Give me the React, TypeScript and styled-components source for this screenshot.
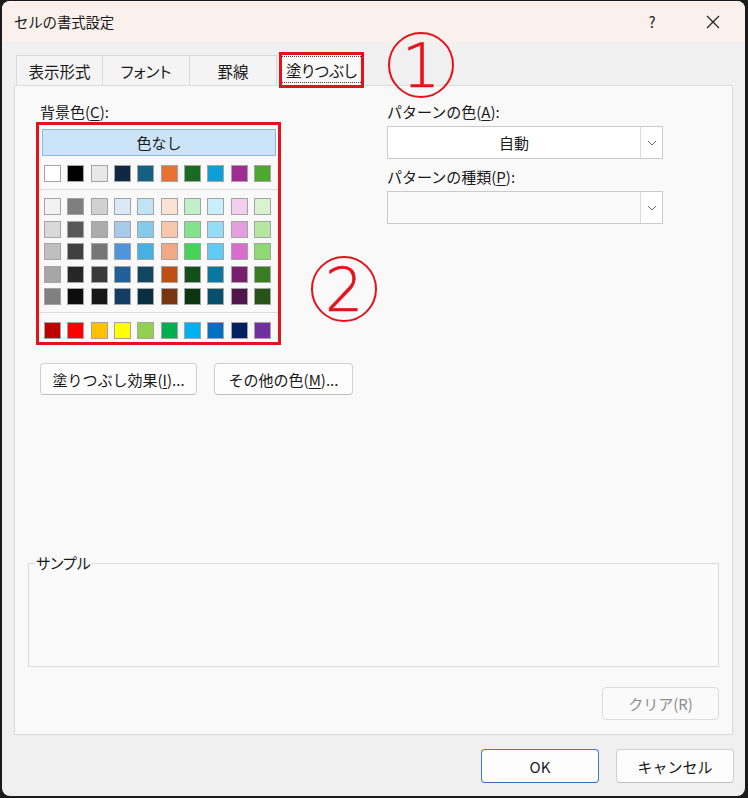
import React from "react";
import styled, { createGlobalStyle, css } from "styled-components";

const GlobalStyle = createGlobalStyle`
  html, body { margin: 0; padding: 0; background: #1b1b1b; }
  body {
    font-family: "Noto Sans CJK JP", "Noto Sans", sans-serif;
    color: #1a1a1a;
  }
  * { box-sizing: border-box; }
`;

const RED = "#e5121b";

/* ---------- window chrome ---------- */

const Frame = styled.div`
  width: 748px;
  height: 798px;
  padding: 1px 3px 2px 2px;
  background: #1b1b1b;
`;

const Window = styled.div`
  position: relative;
  width: 100%;
  height: 100%;
  display: flex;
  flex-direction: column;
  background: #f0f0f0;
  border-radius: 8px;
  overflow: hidden;
`;

const TitleBar = styled.div`
  height: 41px;
  flex: none;
  display: flex;
  align-items: center;
  padding: 0 9px 0 12px;
  background: #faf1ed;
`;

const Title = styled.div`
  flex: 1;
  font-size: 14.5px;
  line-height: 20px;
  letter-spacing: -0.2px;
`;

const TitleButton = styled.div`
  width: 46px;
  height: 41px;
  display: flex;
  align-items: center;
  justify-content: center;
  font-size: 15px;
  color: #222;
  & + & { margin-left: 15px; }
`;

const Body = styled.div`
  flex: 1;
  display: flex;
  flex-direction: column;
  padding: 0 12px 0 12px;
`;

/* ---------- tabs ---------- */

const TabStrip = styled.div`
  height: 43px;
  flex: none;
  display: flex;
  align-items: flex-end;
  padding-left: 2px;
`;

const Tab = styled.div<{ $active?: boolean; $first?: boolean }>`
  position: relative;
  flex: none;
  width: 87px;
  height: 30px;
  display: flex;
  align-items: center;
  justify-content: center;
  font-size: 15.5px;
  font-feature-settings: "palt";
  background: #f4f4f4;
  border: 1px solid #dadada;
  border-bottom: none;
  border-left-width: ${(p) => (p.$first ? 1 : 0)}px;
  ${(p) =>
    p.$active &&
    css`
      z-index: 1;
      width: 85px;
      height: 36px;
      margin-left: 2px;
      margin-bottom: -3px;
      background: #f9f9f9;
      border: 3px solid ${RED};
    `}
`;

const FocusRing = styled.span`
  align-self: stretch;
  flex: 1;
  margin: 1px 0 2px;
  display: flex;
  align-items: center;
  justify-content: center;
  border-top: 1px dotted #444;
  border-bottom: 1px dotted #444;
`;

/* ---------- panel ---------- */

const Panel = styled.div`
  height: 650px;
  flex: none;
  display: flex;
  flex-direction: column;
  padding: 16px 13px 14px 13px;
  background: #f9f9f9;
  border: 1px solid #dcdcdc;
`;

const TopRow = styled.div`
  display: flex;
  align-items: flex-start;
  padding-left: 8px;
`;

const LeftColumn = styled.div`
  width: 245px;
  flex: none;
  display: flex;
  flex-direction: column;
`;

const RightColumn = styled.div`
  width: 276px;
  flex: none;
  margin-left: 106px;
  display: flex;
  flex-direction: column;
`;

const Label = styled.div<{ $indent?: number; $gap?: number }>`
  height: 20px;
  line-height: 20px;
  font-size: 15px;
  padding-left: ${(p) => p.$indent ?? 0}px;
  margin-top: ${(p) => p.$gap ?? 0}px;
  white-space: nowrap;
  u { text-underline-offset: 2px; }
`;

/* ---------- colour palette ---------- */

const Palette = styled.div`
  width: 245px;
  border: 3px solid ${RED};
  padding: 4px 2px 3px 3px;
  display: flex;
  flex-direction: column;
`;

const NoColor = styled.div`
  height: 27px;
  display: flex;
  align-items: center;
  justify-content: center;
  font-size: 15px;
  background: #cce4f7;
  border: 1px solid #8db7dc;
`;

const SwatchGrid = styled.div<{ $top: number }>`
  display: grid;
  grid-template-columns: repeat(10, 17px);
  column-gap: 6.33px;
  row-gap: 5.5px;
  margin: ${(p) => p.$top}px 0 0 2px;
`;

const Swatch = styled.div<{ $color: string }>`
  width: 17px;
  height: 17px;
  background: ${(p) => p.$color};
  border: 1px solid #a4a4a4;
`;

const Divider = styled.div<{ $top: number; $bottom: number }>`
  height: 1px;
  background: #dcdcdc;
  margin: ${(p) => p.$top}px -2px ${(p) => p.$bottom}px -3px;
`;

/* ---------- buttons and selects ---------- */

const ActionRow = styled.div`
  display: flex;
  gap: 17px;
  margin-top: 18px;
  padding-left: 4px;
`;

const Button = styled.div<{ $width: number; $height?: number; $disabled?: boolean; $default?: boolean }>`
  flex: none;
  width: ${(p) => p.$width}px;
  height: ${(p) => p.$height ?? 32}px;
  display: flex;
  align-items: center;
  justify-content: center;
  font-size: 15px;
  white-space: nowrap;
  border-radius: 4px;
  background: ${(p) => (p.$disabled ? "#fafafa" : "#fdfdfd")};
  color: ${(p) => (p.$disabled ? "#8d8d8d" : "#1a1a1a")};
  border: 1px solid ${(p) => (p.$default ? "#3f7fc6" : p.$disabled ? "#dddddd" : "#d0d0d0")};
  border-bottom-color: ${(p) => (p.$default ? "#2f6fb8" : p.$disabled ? "#dddddd" : "#bdbdbd")};
  u { text-underline-offset: 2px; }
`;

const Select = styled.div<{ $disabled?: boolean }>`
  height: 33px;
  margin-top: 4px;
  display: flex;
  background: ${(p) => (p.$disabled ? "#f9f9f9" : "#ffffff")};
  border: 1px solid #cacaca;
`;

const SelectValue = styled.div`
  flex: 1;
  display: flex;
  align-items: center;
  justify-content: center;
  font-size: 15px;
`;

const SelectArrow = styled.div`
  width: 22px;
  display: flex;
  align-items: center;
  justify-content: center;
  border-left: 1px solid #dadada;
  background: #ffffff;
`;

/* ---------- sample box ---------- */

const Sample = styled.fieldset`
  margin: auto 0 0 0;
  height: 114px;
  padding: 0 6px;
  border: 1px solid #dcdcdc;
  background: #fafafa;
`;

const SampleLegend = styled.legend`
  padding: 0 1px;
  font-size: 15px;
  line-height: 20px;
  font-feature-settings: "palt";
`;

const ClearRow = styled.div`
  display: flex;
  justify-content: flex-end;
  margin-top: 20px;
`;

const Footer = styled.div`
  flex: 1;
  display: flex;
  justify-content: flex-end;
  align-items: flex-start;
  gap: 17px;
  padding-top: 14px;
  margin-right: -1px;
`;

/* ---------- callout numbers ---------- */

const Callout = styled.span<{ $x: number; $y: number }>`
  position: absolute;
  left: ${(p) => p.$x}px;
  top: ${(p) => p.$y}px;
  width: 66px;
  height: 66px;
  display: flex;
  align-items: center;
  justify-content: center;
  border: 2px solid ${RED};
  border-radius: 50%;
  color: ${RED};
  font-family: "DejaVu Sans", sans-serif;
  font-weight: 200;
  font-size: 60px;
  line-height: 1;
  padding-top: 2px;
  -webkit-text-stroke: 0.6px ${RED};
  z-index: 5;
`;

const Chevron = () => (
  <svg width="10" height="6" viewBox="0 0 10 6">
    <polyline points="1,1 5,5 9,1" fill="none" stroke="#6a6a6a" strokeWidth="1" />
  </svg>
);

const CloseIcon = () => (
  <svg width="14" height="14" viewBox="0 0 14 14">
    <path d="M1 1 L13 13 M13 1 L1 13" stroke="#222" strokeWidth="1.2" fill="none" />
  </svg>
);

const THEME = ["#FFFFFF", "#000000", "#E8E8E8", "#0E2841", "#156082", "#E97132", "#196B24", "#0F9ED5", "#A02B93", "#4EA72E"];

const SHADES = [
  ["#F2F2F2", "#7F7F7F", "#D1D1D1", "#DAE9F8", "#C1E4F5", "#FBE2D5", "#C1F0C8", "#CAEEFB", "#F2CEEF", "#DAF2D0"],
  ["#D9D9D9", "#595959", "#ACACAC", "#A6C9EC", "#83CAEB", "#F7C7AC", "#83E28E", "#95DCF7", "#E59EDD", "#B5E6A2"],
  ["#BFBFBF", "#404040", "#767676", "#4E95D9", "#45B0E1", "#F1A983", "#47D359", "#61CBF3", "#D86DCD", "#8ED973"],
  ["#A6A6A6", "#262626", "#3A3A3A", "#215F9A", "#0F4761", "#C04F15", "#124F1A", "#0B76A0", "#77206D", "#3B7D23"],
  ["#808080", "#0D0D0D", "#171717", "#153D64", "#0A2F40", "#78350F", "#0C3511", "#074F6A", "#501549", "#275317"],
];

const STANDARD = ["#C00000", "#FF0000", "#FFC000", "#FFFF00", "#92D050", "#00B050", "#00B0F0", "#0070C0", "#002060", "#7030A0"];

const TABS = ["表示形式", "フォント", "罫線", "塗りつぶし"];

export default function App() {
  return (
    <>
      <GlobalStyle />
      <Frame>
        <Window>
          <TitleBar>
            <Title>セルの書式設定</Title>
            <TitleButton>?</TitleButton>
            <TitleButton>
              <CloseIcon />
            </TitleButton>
          </TitleBar>

          <Body>
            <TabStrip>
              {TABS.map((t, i) =>
                i === 3 ? (
                  <Tab key={t} $active>
                    <FocusRing>{t}</FocusRing>
                  </Tab>
                ) : (
                  <Tab key={t} $first={i === 0}>
                    {t}
                  </Tab>
                )
              )}
            </TabStrip>

            <Panel>
              <TopRow>
                <LeftColumn>
                  <Label $indent={4}>
                    背景色(<u>C</u>):
                  </Label>
                  <Palette>
                    <NoColor>色なし</NoColor>
                    <SwatchGrid $top={9}>
                      {THEME.map((c, i) => (
                        <Swatch key={i} $color={c} />
                      ))}
                    </SwatchGrid>
                    <Divider $top={7} $bottom={8} />
                    <SwatchGrid $top={0}>
                      {SHADES.flat().map((c, i) => (
                        <Swatch key={i} $color={c} />
                      ))}
                    </SwatchGrid>
                    <Divider $top={7} $bottom={9} />
                    <SwatchGrid $top={0}>
                      {STANDARD.map((c, i) => (
                        <Swatch key={i} $color={c} />
                      ))}
                    </SwatchGrid>
                  </Palette>
                  <ActionRow>
                    <Button $width={157}>
                      塗りつぶし効果(<u>I</u>)...
                    </Button>
                    <Button $width={139}>
                      その他の色(<u>M</u>)...
                    </Button>
                  </ActionRow>
                </LeftColumn>

                <RightColumn>
                  <Label>
                    パターンの色(<u>A</u>):
                  </Label>
                  <Select>
                    <SelectValue>自動</SelectValue>
                    <SelectArrow>
                      <Chevron />
                    </SelectArrow>
                  </Select>
                  <Label $gap={8}>
                    パターンの種類(<u>P</u>):
                  </Label>
                  <Select $disabled>
                    <SelectValue />
                    <SelectArrow>
                      <Chevron />
                    </SelectArrow>
                  </Select>
                </RightColumn>
              </TopRow>

              <Sample>
                <SampleLegend>サンプル</SampleLegend>
              </Sample>

              <ClearRow>
                <Button $width={117} $height={33} $disabled>
                  クリア(R)
                </Button>
              </ClearRow>
            </Panel>

            <Footer>
              <Button $width={118} $height={34} $default>
                OK
              </Button>
              <Button $width={118} $height={34}>
                キャンセル
              </Button>
            </Footer>
          </Body>

          <Callout $x={386} $y={31}>1</Callout>
          <Callout $x={309} $y={255}>2</Callout>
        </Window>
      </Frame>
    </>
  );
}
